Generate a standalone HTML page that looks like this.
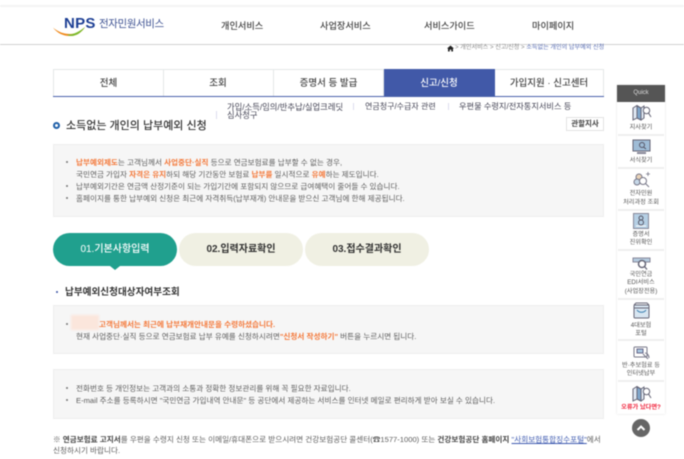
<!DOCTYPE html>
<html lang="ko"><head><meta charset="utf-8"><title>소득없는 개인의 납부예외 신청</title>
<style>
html,body{margin:0;padding:0;background:#fff}
#p{position:relative;width:684px;height:459px;overflow:hidden;font-family:"Liberation Sans","Noto Sans CJK KR",sans-serif;color:#5c5c5c;filter:blur(.4px)}
#p div,#p span.t{position:absolute;white-space:nowrap}
.t{line-height:12px;font-size:7.6px}
.o{color:#f47a3c;font-weight:700}
.box{left:53px;width:549px;background:#f6f6f6;border:1px solid #eee}
.tab{top:69px;height:26px;line-height:27px;text-align:center;font-size:9.5px;color:#444;font-weight:500;border:1px solid #e4e8e8;border-left:0;box-sizing:content-box}
.step{top:233px;height:33px;line-height:34px;border-radius:17px;text-align:center;font-size:10px;font-weight:700;color:#333;background:#f0f0e3;width:124px}
.q{left:617px;width:48px;text-align:center;font-size:6.2px;line-height:8px;color:#555}
.qd{left:618px;width:46px;height:2px;background:#eee}
.bu{left:66px;width:2px;height:2px;background:#777;border-radius:50%}
</style></head><body><div id="p">
<div style="left:0;top:5px;width:684px;height:2px;background:#f4f4f4"></div>
<div style="left:0;top:44px;width:684px;height:1px;background:#d2d2d2"></div>

<svg style="position:absolute;left:52px;top:24px" width="36" height="14" viewBox="0 0 36 14"><path d="M1 3.500C6 8 12 10 18 10C24 10 29 7 33 3C30 8 25 12 18 12C11 12 5 9 1 3.500Z" fill="#f08a1d"/><path d="M15 10.500C22 11 28 7 33 3C30 8 25 12 19 12C17 12 16 11 15 10.500Z" fill="#7dbb2e"/></svg>
<div style="left:64px;top:14.500px;font-size:15px;line-height:18px;font-weight:700;color:#1d3f94;letter-spacing:.3px">NPS</div>
<div style="left:99px;top:16.500px;font-size:10.5px;line-height:14px;color:#3e5292;letter-spacing:-.4px">전자민원서비스</div>
<div class="t" style="left:221px;top:20px;font-size:9.200px;color:#444;font-weight:500">개인서비스</div>
<div class="t" style="left:320px;top:20px;font-size:9.200px;color:#444;font-weight:500">사업장서비스</div>
<div class="t" style="left:424px;top:20px;font-size:9.200px;color:#444;font-weight:500">서비스가이드</div>
<div class="t" style="left:532px;top:20px;font-size:9.200px;color:#444;font-weight:500">마이페이지</div>

<svg style="position:absolute;left:447px;top:45px" width="7" height="7" viewBox="0 0 7 7"><path d="M3.500 .5L7 3.500H6V6.500H4.300V4.600H2.700V6.500H1V3.500H0Z" fill="#222"/></svg>
<div class="t" style="left:455px;top:42px;font-size:6.100px;color:#888">&gt; 개인서비스 &gt; 신고/신청 &gt; <span style="color:#5a6fb5">소득없는 개인의 납부예외 신청</span></div>

<div class="tab" style="left:53px;width:109px;border-left:1px solid #e4e8e8">전체</div>
<div class="tab" style="left:163px;width:110px">조회</div>
<div class="tab" style="left:274px;width:109px">증명서 등 발급</div>
<div class="tab" style="left:384px;width:110px;background:#4159a8;color:#fff;border-color:#4159a8">신고/신청</div>
<div class="tab" style="left:495px;width:108px">가입지원 · 신고센터</div>
<div style="left:53px;top:96px;width:551px;height:1px;background:#4a62ac"></div>

<div class="t" style="left:227px;top:100.500px;font-size:8.300px;color:#445">가입/소득/임의/반추납/실업크레딧</div>
<div class="t" style="left:227px;top:108.500px;font-size:8.300px;color:#445">심사청구</div>
<div style="left:216px;top:111px;width:1px;height:8px;background:#dde"></div>
<div style="left:353px;top:103px;width:1px;height:7px;background:#dde"></div>
<div class="t" style="left:365px;top:100.500px;font-size:8px;color:#445">연금청구/수급자 관련</div>
<div style="left:448px;top:103px;width:1px;height:7px;background:#dde"></div>
<div class="t" style="left:459px;top:100.500px;font-size:8.200px;color:#445">우편물 수령지/전자통지서비스 등</div>

<div style="left:566px;top:117px;width:36px;height:12px;line-height:12px;border:1px solid #e3e3e3;text-align:center;font-size:7.500px;font-weight:700;color:#444">관할지사</div>
<div style="left:53px;top:122px;width:3px;height:3px;border:2px solid #1f5fa8;border-radius:50%"></div>
<div style="left:66px;top:118.500px;font-size:11px;line-height:15px;color:#333;font-weight:500">소득없는 개인의 납부예외 신청</div>

<div class="box" style="top:144px;height:71px"></div>
<div class="bu" style="top:161px"></div><div class="bu" style="top:185px"></div><div class="bu" style="top:197px"></div>
<div class="t" style="left:76px;top:156.500px"><span class="o">납부예외제도</span>는 고객님께서 <span class="o">사업중단·실직</span> 등으로 연금보험료를 납부할 수 없는 경우,</div>
<div class="t" style="left:76px;top:168.500px">국민연금 가입자 <span class="o">자격은 유지</span>하되 해당 기간동안 보험료 <span class="o">납부를</span> 일시적으로 <span class="o">유예</span>하는 제도입니다.</div>
<div class="t" style="left:76px;top:180.500px">납부예외기간은 연금액 산정기준이 되는 가입기간에 포함되지 않으므로 급여혜택이 줄어들 수 있습니다.</div>
<div class="t" style="left:76px;top:192.500px">홈페이지를 통한 납부예외 신청은 최근에 자격취득(납부재개) 안내문을 받으신 고객님에 한해 제공됩니다.</div>

<div class="step" style="left:53px;background:#20a08e;color:#fff;font-weight:500">01.기본사항입력</div>
<div style="left:110px;top:266px;width:0;height:0;border-left:5px solid transparent;border-right:5px solid transparent;border-top:4px solid #20a08e"></div>
<div class="step" style="left:179px">02.입력자료확인</div>
<div class="step" style="left:305px">03.접수결과확인</div>

<div style="left:56px;top:291px;width:2px;height:2px;background:#3a55a5;border-radius:50%"></div>
<div style="left:65px;top:286px;font-size:9.600px;line-height:14px;font-weight:700;color:#333">납부예외신청대상자여부조회</div>

<div class="box" style="top:305px;height:47px"></div>
<div class="bu" style="top:323px"></div>
<div style="left:71px;top:315px;width:28px;height:15px;background:#fbe6dc;filter:blur(1px)"></div>
<div class="t" style="left:99px;top:318.500px;color:#f47a3c;font-weight:700">고객님께서는 최근에 납부재개안내문을 수령하셨습니다.</div>
<div class="t" style="left:76px;top:330.500px">현재 사업중단·실직 등으로 연금보험료 납부 유예를 신청하시려면<span class="o">"신청서 작성하기"</span> 버튼을 누르시면 됩니다.</div>

<div class="box" style="top:369px;height:48px"></div>
<div class="bu" style="top:387px"></div><div class="bu" style="top:399px"></div>
<div class="t" style="left:76px;top:382.500px">전화번호 등 개인정보는 고객과의 소통과 정확한 정보관리를 위해 꼭 필요한 자료입니다.</div>
<div class="t" style="left:76px;top:394.500px">E-mail 주소를 등록하시면 "국민연금 가입내역 안내문" 등 공단에서 제공하는 서비스를 인터넷 메일로 편리하게 받아 보실 수 있습니다.</div>

<div class="t" style="left:53px;top:433.500px">※ <b style="color:#444">연금보험료 고지서</b>를 우편을 수령지 신청 또는 이메일/휴대폰으로 받으시려면 건강보험공단 콜센터(☎1577-1000) 또는 <b style="color:#444">건강보험공단 홈페이지</b> <span style="color:#3f5bb0;text-decoration:underline">"사회보험통합징수포털"</span>에서</div>
<div class="t" style="left:53px;top:444.500px">신청하시기 바랍니다.</div>

<div style="left:617px;top:85px;width:48px;height:329px;background:#fff;box-shadow:0 0 2px #ddd"></div>
<div style="left:617px;top:85px;width:48px;height:17px;line-height:17px;background:#555;color:#ddd;text-align:center;font-size:6px">Quick</div>
<div class="qd" style="top:134px"></div><div class="qd" style="top:167px"></div><div class="qd" style="top:209px"></div><div class="qd" style="top:249px"></div><div class="qd" style="top:298px"></div><div class="qd" style="top:339px"></div><div class="qd" style="top:380px"></div>

<svg style="position:absolute;left:632px;top:104px" width="20" height="18" viewBox="0 0 20 18" fill="none" stroke="#667" stroke-width="1"><path d="M1 4L5 1.500L9 4L12 2V14L9 16L5 14L1 16Z" fill="#dfe8f2"/><path d="M5 1.500V14M9 4V16"/><path d="M5 2L9 4V16L5 14Z" fill="#7fa6cc"/><circle cx="14.500" cy="6.500" r="3.200" fill="#fff"/><path d="M16.500 9L19 13"/></svg>
<div class="q" style="top:123.500px">지사찾기</div>

<svg style="position:absolute;left:632px;top:139px" width="19" height="16" viewBox="0 0 19 16"><rect x="1" y="1" width="17" height="11" fill="#9fbcd6" stroke="#667"/><circle cx="10" cy="6" r="2.500" fill="none" stroke="#556"/><path d="M11.500 8L14 10" stroke="#556"/><path d="M5 14H14" stroke="#889" stroke-width="2"/></svg>
<div class="q" style="top:157px">서식찾기</div>

<svg style="position:absolute;left:632px;top:171px" width="19" height="18" viewBox="0 0 19 18" fill="none" stroke="#778"><circle cx="7" cy="6" r="3" fill="#e9d3b8"/><circle cx="5" cy="11" r="3" fill="#c6d8e8"/><circle cx="11" cy="10" r="3.500" fill="#fff"/><path d="M13.500 12.500L17 16"/><path d="M14 3H18M16 1V5" stroke-width=".8"/></svg>
<div class="q" style="top:190px;line-height:8.500px">전자민원<br>처리과정 조회</div>

<svg style="position:absolute;left:633px;top:213px" width="16" height="16" viewBox="0 0 16 16"><rect x=".5" y=".5" width="15" height="15" fill="#b5cfe4" stroke="#889"/><circle cx="8" cy="5" r="2" fill="none" stroke="#556"/><circle cx="8" cy="9.500" r="2.500" fill="none" stroke="#556"/><path d="M3 13H13" stroke="#fff"/></svg>
<div class="q" style="top:231px">증명서<br>진위확인</div>

<svg style="position:absolute;left:632px;top:257px" width="19" height="14" viewBox="0 0 19 14" fill="none"><rect x="1" y="1" width="17" height="4" fill="#b4cbdf" stroke="#889"/><circle cx="10" cy="7" r="3.500" fill="#fff" stroke="#667" stroke-width="1.500"/><path d="M12.500 9.500L15 12.500" stroke="#667" stroke-width="1.300"/></svg>
<div class="q" style="top:270.500px;line-height:8.500px">국민연금<br>EDI서비스<br>(사업장전용)</div>

<svg style="position:absolute;left:633px;top:302px" width="17" height="17" viewBox="0 0 17 17" fill="none" stroke="#667"><rect x="1" y="3" width="15" height="13" rx="1" fill="#d8e6f1"/><path d="M1 3L3 1H14L16 3" /><path d="M4 8C6 11 11 11 13 8" stroke="#3a7fb0"/><path d="M1 6H16" /></svg>
<div class="q" style="top:322px">4대보험<br>포털</div>

<svg style="position:absolute;left:633px;top:346px" width="17" height="14" viewBox="0 0 17 14" fill="none" stroke="#778"><rect x="1" y="1" width="13" height="10" rx="1"/><rect x="4" y="3" width="6" height="4" fill="#a9c7e0" stroke="#668"/><path d="M10 8L15 13M12 7C14 7 16 9 16 12" /></svg>
<div class="q" style="top:362px">반·추보험료 등<br>인터넷납부</div>

<svg style="position:absolute;left:632px;top:385px" width="20" height="18" viewBox="0 0 20 18" fill="none" stroke="#667" stroke-width="1"><path d="M1 4L5 1.500L9 4L12 2V14L9 16L5 14L1 16Z" fill="#dfe8f2"/><path d="M5 2L9 4V16L5 14Z" fill="#7fa6cc"/><circle cx="14.500" cy="6.500" r="3.200" fill="#fff"/><path d="M16.500 9L19 13"/></svg>
<div class="q" style="top:404px;color:#f0243c;font-weight:700">오류가 났다면?</div>

<div style="left:632px;top:419px;width:18px;height:18px;border-radius:50%;background:#666"></div>
<svg style="position:absolute;left:636px;top:424px" width="10" height="8" viewBox="0 0 10 8"><path d="M1.500 6L5 2.500L8.500 6" fill="none" stroke="#fff" stroke-width="2"/></svg>
</div></body></html>
